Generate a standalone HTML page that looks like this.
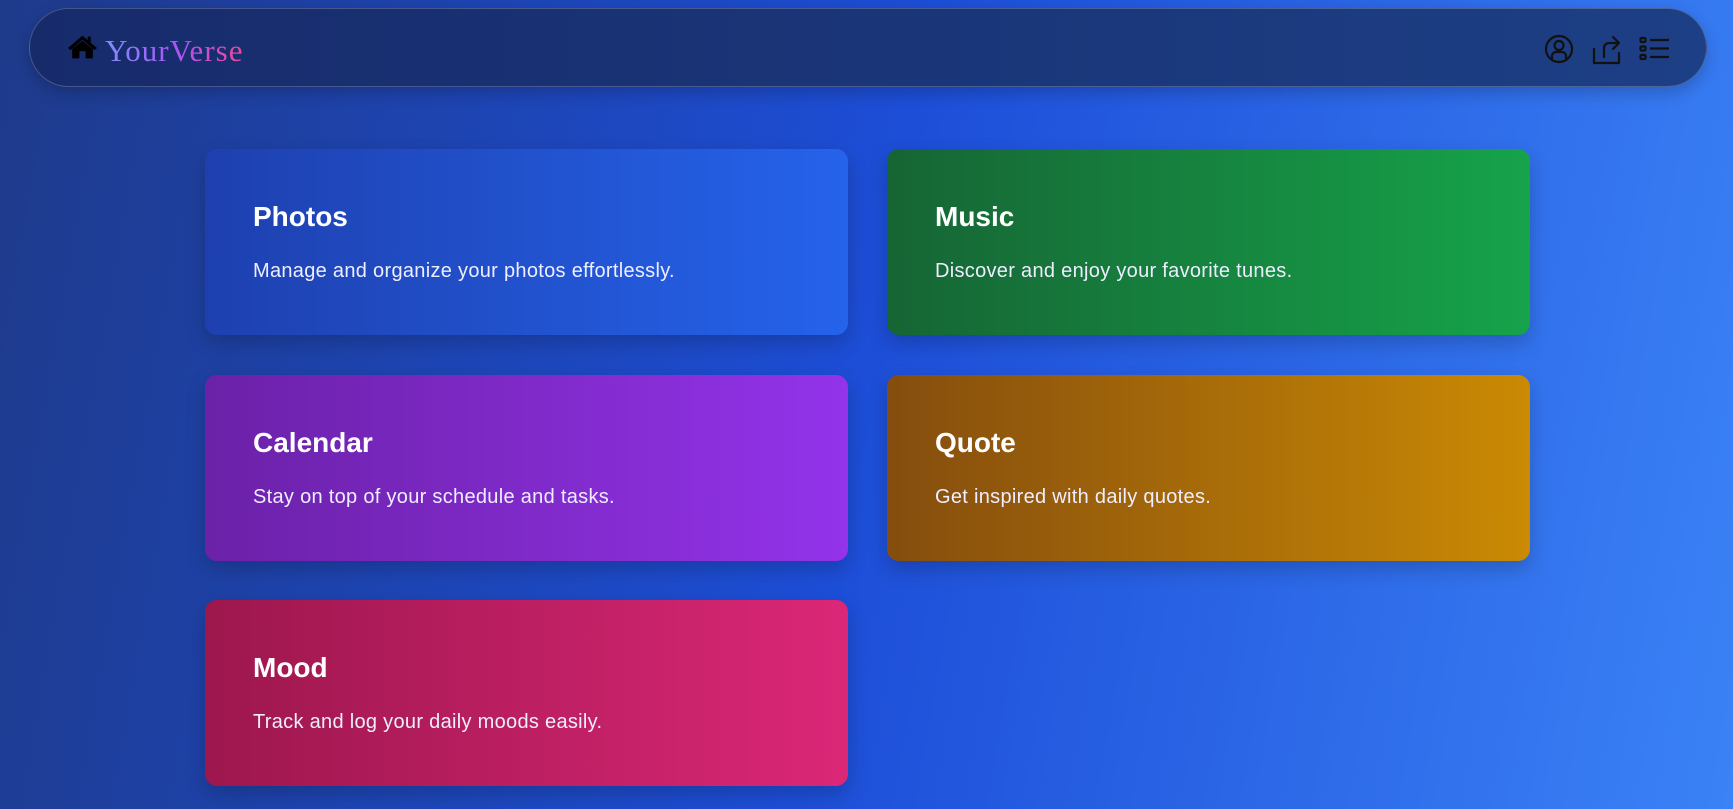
<!DOCTYPE html>
<html><head><meta charset="utf-8"><style>
*{margin:0;padding:0;box-sizing:border-box}
html,body{width:1733px;height:809px;overflow:hidden}
body{background:linear-gradient(100deg,#1e3a8a 0%,#1d4ed8 50%,#3b82f6 100%);font-family:"Liberation Sans",sans-serif;position:relative}
.nav{position:absolute;left:29px;top:8px;width:1678px;height:79px;border-radius:40px;background:linear-gradient(90deg,#172b6b,#1d3f85);border:1px solid rgba(255,255,255,.2);box-shadow:0 6px 16px rgba(0,0,0,.2)}
.logo{position:absolute;top:26px;font-family:"Liberation Serif",serif;font-size:31px;letter-spacing:1px;background:linear-gradient(90deg,#818cf8,#a855f7,#ec4899);-webkit-background-clip:text;background-clip:text;color:transparent;line-height:1}
.card{position:absolute;width:643px;height:186px;border-radius:12px;color:#fff;padding-left:48px;box-shadow:0 8px 20px rgba(0,0,0,.2)}
.card h2{position:absolute;top:52px;font-size:28px;font-weight:bold}
.card p{position:absolute;top:111px;font-size:20px;letter-spacing:.3px;color:#eef}
</style></head><body>
<div class="nav">
<svg style="position:absolute;left:37px;top:25px" width="31" height="26" viewBox="0 0 30 24"><path d="M15 1 L1 13 L3.5 15 L15 5 L26.5 15 L29 13 L23 8 V2 H20 V5.5 Z" fill="#000"/><path d="M5 14 L15 6 L25 14 V23 H18 V16 H12 V23 H5 Z" fill="#000"/></svg>
<div class="logo" style="left:75px">YourVerse</div>
<svg style="position:absolute;left:1513px;top:24px" width="32" height="32" viewBox="0 0 32 32" fill="none" stroke="#111" stroke-width="2.2"><circle cx="16" cy="16" r="13"/><circle cx="16" cy="12.5" r="4.5"/><path d="M9 26 V23 a4 4 0 0 1 4-4 h6 a4 4 0 0 1 4 4 V26"/></svg>
<svg style="position:absolute;left:1561px;top:24px" width="32" height="34" viewBox="0 0 32 34" fill="none" stroke="#111" stroke-width="2.2" stroke-linecap="round" stroke-linejoin="round"><path d="M3 16 V30 H28 V20"/><path d="M13 24 V15 a5 5 0 0 1 5-5 H27"/><path d="M22 4 L28 10 L22 16"/></svg>
<svg style="position:absolute;left:1609px;top:27px" width="32" height="28" viewBox="0 0 32 28" fill="none" stroke="#111" stroke-width="2.2"><rect x="1.5" y="2" width="5" height="4" rx="1"/><rect x="1.5" y="10.5" width="5" height="4" rx="1"/><rect x="1.5" y="19" width="5" height="4" rx="1"/><path d="M11 4 H30 M11 12.5 H30 M11 21 H30"/></svg>
</div>
<div class="card" style="left:205px;top:149px;background:linear-gradient(90deg,#1e40af,#2563eb)"><h2>Photos</h2><p>Manage and organize your photos effortlessly.</p></div>
<div class="card" style="left:887px;top:149px;background:linear-gradient(90deg,#166534,#16a34a)"><h2>Music</h2><p>Discover and enjoy your favorite tunes.</p></div>
<div class="card" style="left:205px;top:375px;background:linear-gradient(90deg,#6b21a8,#9333ea)"><h2>Calendar</h2><p>Stay on top of your schedule and tasks.</p></div>
<div class="card" style="left:887px;top:375px;background:linear-gradient(90deg,#854d0e,#ca8a04)"><h2>Quote</h2><p>Get inspired with daily quotes.</p></div>
<div class="card" style="left:205px;top:600px;background:linear-gradient(90deg,#9d174d,#db2777)"><h2>Mood</h2><p>Track and log your daily moods easily.</p></div>
</body></html>
